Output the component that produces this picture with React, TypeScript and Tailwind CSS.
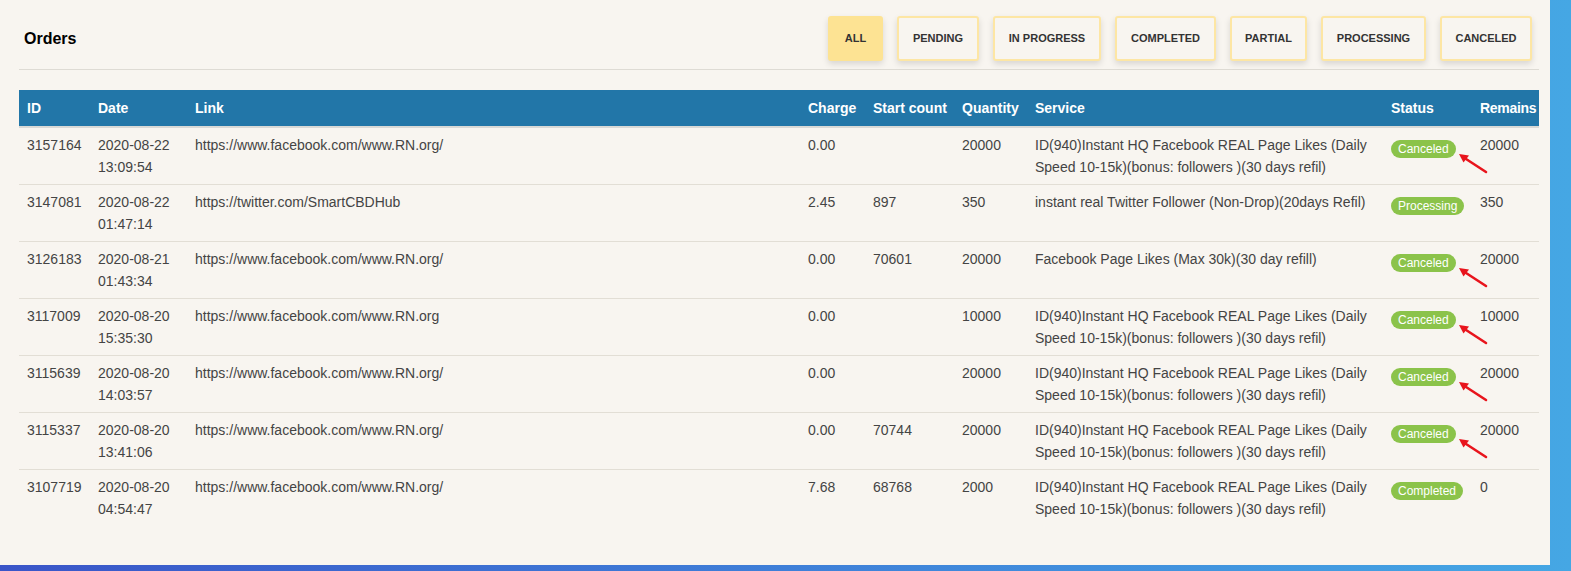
import React from "react";

type Row = {
  id: string;
  date: string;
  time: string;
  link: string;
  charge: string;
  start: string;
  qty: string;
  service: string[];
  status: string;
  remains: string;
  arrow: boolean;
};

const rows: Row[] = [
  { id: "3157164", date: "2020-08-22", time: "13:09:54", link: "https://www.facebook.com/www.RN.org/", charge: "0.00", start: "", qty: "20000", service: ["ID(940)Instant HQ Facebook REAL Page Likes (Daily", "Speed 10-15k)(bonus: followers )(30 days refil)"], status: "Canceled", remains: "20000", arrow: true },
  { id: "3147081", date: "2020-08-22", time: "01:47:14", link: "https://twitter.com/SmartCBDHub", charge: "2.45", start: "897", qty: "350", service: ["instant real Twitter Follower (Non-Drop)(20days Refil)"], status: "Processing", remains: "350", arrow: false },
  { id: "3126183", date: "2020-08-21", time: "01:43:34", link: "https://www.facebook.com/www.RN.org/", charge: "0.00", start: "70601", qty: "20000", service: ["Facebook Page Likes (Max 30k)(30 day refill)"], status: "Canceled", remains: "20000", arrow: true },
  { id: "3117009", date: "2020-08-20", time: "15:35:30", link: "https://www.facebook.com/www.RN.org", charge: "0.00", start: "", qty: "10000", service: ["ID(940)Instant HQ Facebook REAL Page Likes (Daily", "Speed 10-15k)(bonus: followers )(30 days refil)"], status: "Canceled", remains: "10000", arrow: true },
  { id: "3115639", date: "2020-08-20", time: "14:03:57", link: "https://www.facebook.com/www.RN.org/", charge: "0.00", start: "", qty: "20000", service: ["ID(940)Instant HQ Facebook REAL Page Likes (Daily", "Speed 10-15k)(bonus: followers )(30 days refil)"], status: "Canceled", remains: "20000", arrow: true },
  { id: "3115337", date: "2020-08-20", time: "13:41:06", link: "https://www.facebook.com/www.RN.org/", charge: "0.00", start: "70744", qty: "20000", service: ["ID(940)Instant HQ Facebook REAL Page Likes (Daily", "Speed 10-15k)(bonus: followers )(30 days refil)"], status: "Canceled", remains: "20000", arrow: true },
  { id: "3107719", date: "2020-08-20", time: "04:54:47", link: "https://www.facebook.com/www.RN.org/", charge: "7.68", start: "68768", qty: "2000", service: ["ID(940)Instant HQ Facebook REAL Page Likes (Daily", "Speed 10-15k)(bonus: followers )(30 days refil)"], status: "Completed", remains: "0", arrow: false },
];

const buttons: { label: string; w: string; active?: boolean }[] = [
  { label: "ALL", w: "w-[55px]", active: true },
  { label: "PENDING", w: "w-[82px]" },
  { label: "IN PROGRESS", w: "w-[108px]" },
  { label: "COMPLETED", w: "w-[101px]" },
  { label: "PARTIAL", w: "w-[77px]" },
  { label: "PROCESSING", w: "w-[105px]" },
  { label: "CANCELED", w: "w-[92px]" },
];

function Arrow() {
  return (
    <svg className="absolute left-[68px] top-[20px]" width="30" height="22" viewBox="0 0 30 22">
      <line x1="4" y1="3" x2="27" y2="18" stroke="#e8141c" strokeWidth="2.6" strokeLinecap="round" />
      <polygon points="0,0 10,1.5 4.5,8.5" fill="#e8141c" />
    </svg>
  );
}

export default function App() {
  const th = "text-left font-bold text-white px-2 py-[7px] leading-[22px] text-[14px] whitespace-nowrap";
  const td = "align-top px-2 py-[6px] leading-[22px] text-[14px] text-[#444]";
  return (
    <div
      className="w-[1571px] h-[571px] overflow-hidden bg-gradient-to-r from-[#3a55c8] via-[#3f7fd8] to-[#45a7e4]"
      style={{ fontFamily: '"Liberation Sans", Arial, sans-serif' }}
    >
      <div className="w-[1550px] h-[565px] bg-[#f8f5f0] pt-[16px] pl-[19px]">
        <div className="w-[1520px]">
          <div className="flex items-start justify-between pl-[5px] pr-[7px] pb-[8px] border-b border-[#dedbd4]">
            <div className="text-[16px] font-bold text-black leading-[45px] h-[45px]">Orders</div>
            <div className="flex gap-[14px]">
              {buttons.map((b) => (
                <div
                  key={b.label}
                  className={
                    b.active
                      ? `${b.w} h-[45px] flex items-center justify-center rounded-[3px] bg-[#fde393] text-[11px] font-bold text-[#333] shadow-[0_3px_6px_rgba(0,0,0,0.13)]`
                      : `${b.w} h-[45px] flex items-center justify-center rounded-[3px] border-2 border-[#fde6a4] bg-[#f8f5f0] text-[11px] font-bold text-[#333] shadow-[0_3px_6px_rgba(0,0,0,0.13)]`
                  }
                >
                  {b.label}
                </div>
              ))}
            </div>
          </div>
          <table className="mt-[20px] w-[1520px] table-fixed border-collapse">
            <colgroup>
              <col className="w-[71px]" />
              <col className="w-[97px]" />
              <col className="w-[613px]" />
              <col className="w-[65px]" />
              <col className="w-[89px]" />
              <col className="w-[73px]" />
              <col className="w-[356px]" />
              <col className="w-[89px]" />
              <col className="w-[67px]" />
            </colgroup>
            <thead>
              <tr className="bg-[#2276a8] border-b-2 border-[#d9d9d6]">
                <th className={th}>ID</th>
                <th className={th}>Date</th>
                <th className={th}>Link</th>
                <th className={th}>Charge</th>
                <th className={th}>Start count</th>
                <th className={th}>Quantity</th>
                <th className={th}>Service</th>
                <th className={th}>Status</th>
                <th className={`${th} tracking-[-0.3px]`}>Remains</th>
              </tr>
            </thead>
            <tbody>
              {rows.map((r, i) => (
                <tr key={r.id} className={i < rows.length - 1 ? "border-b border-[#e2ded5]" : ""}>
                  <td className={td}>{r.id}</td>
                  <td className={td}>
                    <div>{r.date}</div>
                    <div>{r.time}</div>
                  </td>
                  <td className={td}>{r.link}</td>
                  <td className={td}>{r.charge}</td>
                  <td className={td}>{r.start}</td>
                  <td className={td}>{r.qty}</td>
                  <td className={`${td} whitespace-nowrap`}>
                    {r.service.map((s) => (
                      <div key={s}>{s}</div>
                    ))}
                  </td>
                  <td className={td}>
                    <div className="relative pt-[3px]">
                      <span className="inline-flex h-[18px] items-center rounded-full bg-[#8bc34a] px-[7px] text-[12px] leading-[18px] text-white">
                        {r.status}
                      </span>
                      {r.arrow && <Arrow />}
                    </div>
                  </td>
                  <td className={td}>{r.remains}</td>
                </tr>
              ))}
            </tbody>
          </table>
        </div>
      </div>
    </div>
  );
}
